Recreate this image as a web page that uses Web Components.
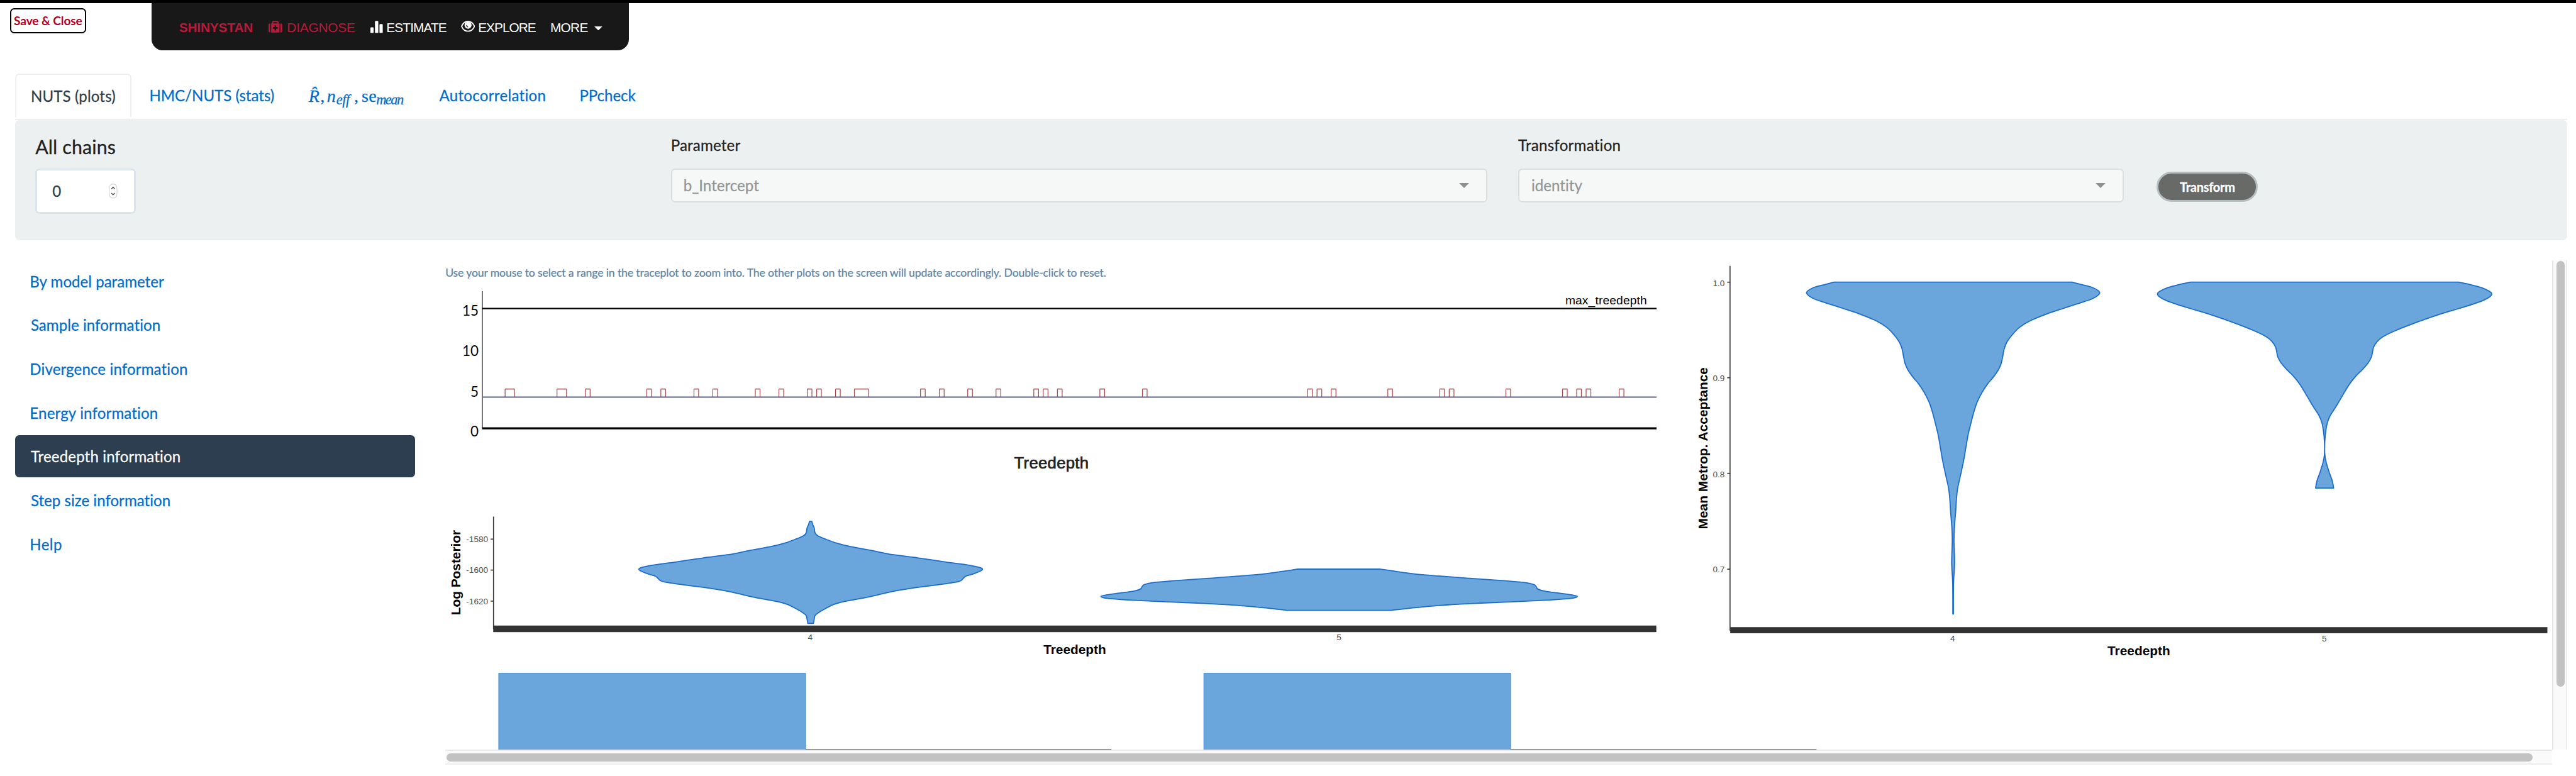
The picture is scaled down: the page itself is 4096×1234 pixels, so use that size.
<!DOCTYPE html>
<html lang="en">
<head>
<meta charset="utf-8">
<title>ShinyStan</title>
<style>
html,body{margin:0;padding:0;background:#fff;overflow:hidden}
body{font-family:Lato,"Liberation Sans",sans-serif}
stan-app{zoom:.80204}
</style>
</head>
<body>
<stan-app></stan-app>
<script>
const define = (name, html, setup) => {
  const t = document.createElement('template');
  t.innerHTML = html;
  customElements.define(name, class extends HTMLElement {
    connectedCallback() {
      if (this.shadowRoot) return;
      this.attachShadow({mode: 'open'}).append(t.content.cloneNode(true));
      if (setup) setup.call(this, this.shadowRoot);
    }
  });
};

// Text run tracked so that its ink fills the width given in "w".
const pen = document.createElement('canvas').getContext('2d');
customElements.define('ink-label', class extends HTMLElement {
  connectedCallback() {
    if (this.shadowRoot) return;
    const root = this.attachShadow({mode: 'open'});
    root.innerHTML = '<style>:host{display:block;white-space:nowrap;flex:none}slot{display:block}</style><slot></slot>';
    const cs = getComputedStyle(this), text = this.textContent, w = +this.getAttribute('w');
    pen.font = `${cs.fontStyle} ${cs.fontWeight} ${cs.fontSize} ${cs.fontFamily}`;
    const m = pen.measureText(text), ink = m.actualBoundingBoxLeft + m.actualBoundingBoxRight;
    this.style.width = w + 'px';
    if (text.length > 1) this.style.letterSpacing = ((w - ink) / (text.length - 1)).toFixed(3) + 'px';
    this.style.textIndent = m.actualBoundingBoxLeft.toFixed(2) + 'px';
  }
});

define('save-button', `<style>
:host{display:flex;box-sizing:border-box;width:151px;height:50px;border:2.500px solid #000;border-radius:8px;background:#fff;
align-items:center;justify-content:center;font:700 24px/30px Lato,sans-serif;color:#b3001f}
</style><ink-label w="136">Save &amp; Close</ink-label>`);

define('nav-bar', `<style>
:host{display:flex;box-sizing:border-box;width:947px;height:94px;padding:3px 0 0 55px;border-radius:0 0 22px 22px;background:#181818;
align-items:center;font:400 26px/30px "Liberation Sans",sans-serif;color:#fff}
svg{display:block;flex:none}
.red{color:#b9193a}.brand{font-weight:700}
</style>
<ink-label class="red brand" w="146">SHINYSTAN</ink-label>
<svg class="red" style="margin:-2px 11px 0 32px" width="27" height="24" viewBox="0 0 27 24" fill="currentColor"><path d="M3.3 5.2V23.3H2.6A2.6 2.6 0 0 1 0 20.7V7.8A2.6 2.6 0 0 1 2.6 5.2zM23.700 5.200h.7A2.600 2.600 0 0 1 27 7.800v12.900a2.600 2.600 0 0 1-2.600 2.600h-.7z"/><path fill-rule="evenodd" d="M5.200 5.200H7V2.600A2.200 2.200 0 0 1 9.200.4h8.600A2.200 2.200 0 0 1 20 2.600v2.600h1.800v18.100H5.200zM9.400 2.800v2.400h8.200V2.800zM12 9.200v3.400H8.600v3.400H12v3.400h3V16h3.400v-3.400H15V9.200z"/></svg>
<ink-label class="red" w="133">DIAGNOSE</ink-label>
<svg style="margin:-2px 8px 0 31px" width="25" height="24" viewBox="0 0 25 24" fill="currentColor"><path d="M0 24V14.500a1.500 1.500 0 0 1 1.500-1.500h3.300a1.500 1.500 0 0 1 1.500 1.500V24zM9 24V1.800A1.500 1.500 0 0 1 10.500.2h3.600a1.500 1.500 0 0 1 1.500 1.600V24zM18 24V8a1.500 1.500 0 0 1 1.500-1.500h3.400A1.500 1.500 0 0 1 24.400 8V24z"/></svg>
<ink-label w="118">ESTIMATE</ink-label>
<svg style="margin:-5px 8px 0 28px" width="28" height="22" viewBox="0 0 28 22"><path d="M1.200 11C4 4.500 8.500 1.200 14 1.200S24 4.500 26.800 11C24 17.500 19.500 20.800 14 20.800S4 17.500 1.200 11z" fill="none" stroke="#fff" stroke-width="2.300"/><circle cx="14" cy="8.800" r="7" fill="#fff"/><path d="M11 8.500c0 2 1.300 3.800 3.200 4" fill="none" stroke="#181818" stroke-width="1.500"/></svg>
<ink-label w="113">EXPLORE</ink-label>
<ink-label style="margin-left:30px" w="73">MORE</ink-label>
<svg style="margin:4px 0 0 13px" width="16" height="8" viewBox="0 0 16 8"><path d="M0 0h16L8 8z" fill="#fff"/></svg>`);

define('math-label', `<style>
:host{display:flex;align-items:baseline;width:188px;font:400 35px/46px "Liberation Serif",serif;position:relative;top:3px}
span{font-style:italic;width:23px;flex:none}
.s{font-size:28px;position:relative;top:5px}
</style>
<span>R&#x302;</span><ink-label style="margin-left:1px" w="6">,</ink-label>
<ink-label style="font-style:italic;margin-left:7px" w="17">n</ink-label>
<ink-label class="s" style="font-style:italic;margin-left:1px" w="30">eff</ink-label>
<ink-label style="margin-left:6px" w="6">,</ink-label><ink-label style="margin-left:9px" w="28">se</ink-label>
<ink-label class="s" style="font-style:italic;margin-left:1px" w="53">mean</ink-label>`);

define('tab-strip', `<style>
:host{display:flex;height:90px;font-size:30px;line-height:42px;color:#006dcc;align-items:flex-start;-webkit-text-stroke-width:.35px}
div{height:86px;display:flex;align-items:center}
.on{box-sizing:border-box;width:231px;border:2.500px solid #ecf0f1;border-bottom:0;border-radius:8px 8px 0 0;padding:1px 0 0 30.500px;color:#2c3e50}
</style>
<div class="on"><ink-label w="165">NUTS (plots)</ink-label></div>
<div style="margin-left:37px"><ink-label w="245">HMC/NUTS (stats)</ink-label></div>
<div style="margin-left:69px"><math-label></math-label></div>
<div style="margin-left:71px"><ink-label w="210">Autocorrelation</ink-label></div>
<div style="margin-left:70px"><ink-label w="110">PPcheck</ink-label></div>`);

define('number-box', `<style>
:host{display:flex;box-sizing:border-box;width:199px;height:90px;border:4px solid #dce4ec;border-radius:8px;background:#fff;
align-items:center;padding:0 32px 0 30px;justify-content:space-between;font-size:30px;line-height:42px;color:#2c3e50}
</style><ink-label w="17">0</ink-label>
<svg width="17" height="30" viewBox="0 0 17 30"><rect x=".8" y=".8" width="15.400" height="28" rx="7.500" fill="#fff" stroke="#cfcfcf" stroke-width="1.300"/><path d="M5.200 10.500 8.500 7l3.300 3.500M5.200 18.800l3.300 3.500 3.300-3.500" fill="none" stroke="#444" stroke-width="1.700"/></svg>`);

define('select-box', `<style>
:host{display:flex;box-sizing:border-box;height:68px;border:2.500px solid #dcdfe0;border-radius:8px;background:#f6f8f7;
align-items:center;justify-content:space-between;padding:0 33.500px 0 24.500px;font-size:30px;line-height:42px;color:#929696}
</style><slot></slot><svg width="20" height="10" viewBox="0 0 20 10"><path d="M0 0h20L10 10z" fill="#8d9191"/></svg>`);

define('control-panel', `<style>
:host{display:flex;box-sizing:border-box;height:238px;border-radius:8px;background:#ecf0f1;padding-left:40px;align-items:flex-start;color:#222;line-height:42px;font-size:30px;-webkit-text-stroke-width:.35px}
.chains{width:199px;padding-top:33px;font-size:38px}
.chains number-box{margin-top:21px}
.f{padding-top:29px}.f select-box{margin-top:25px}
button{margin:102px 0 0 66px;width:200px;height:60px;border:4px solid #b4bec0;border-radius:30px;background:#686a68;color:#fff;
font:700 25px/30px Lato,sans-serif;display:flex;align-items:center;justify-content:center;padding:0}
</style>
<div class="chains"><ink-label w="158">All chains</ink-label><number-box></number-box></div>
<div class="f" style="width:1619px;margin-left:1061px"><ink-label style="margin-left:2px" w="136">Parameter</ink-label><select-box><ink-label w="148">b_Intercept</ink-label></select-box></div>
<div class="f" style="width:1200px;margin-left:61px"><ink-label w="202">Transformation</ink-label><select-box><ink-label w="101">identity</ink-label></select-box></div>
<button><ink-label w="109">Transform</ink-label></button>`);

define('side-item', `<style>
:host{display:flex;box-sizing:border-box;height:82.860px;padding:1px 0 0 31px;align-items:center;border-radius:8px;font-size:30px;line-height:42px;color:#006dcc;-webkit-text-stroke-width:.35px}
:host([active]){background:#2c3e50;color:#fff}
</style><slot></slot>`);

define('side-nav', `<style>:host{display:flex;flex-direction:column;gap:4px;width:793px;flex:none}</style>
<side-item><ink-label w="265">By model parameter</ink-label></side-item>
<side-item><ink-label w="256">Sample information</ink-label></side-item>
<side-item><ink-label w="310">Divergence information</ink-label></side-item>
<side-item><ink-label w="252">Energy information</ink-label></side-item>
<side-item active><ink-label w="296">Treedepth information</ink-label></side-item>
<side-item><ink-label w="276">Step size information</ink-label></side-item>
<side-item><ink-label w="61">Help</ink-label></side-item>`);

// Closed outline from a half profile: flat cap and base, smooth mirrored flanks.
function violin(pts, cx, ox, oy, sx, sy) {
  const side = s => pts.map(([x, y]) => [ox + (cx + s * (x - cx)) / sx, oy + y / sy]);
  const curve = p => p.slice(1).map((q, i) => {
    const a = p[i - 1] || p[i], b = p[i], d = p[i + 2] || q;
    return 'C' + [b[0] + (q[0] - a[0]) / 6, b[1] + (q[1] - a[1]) / 6, q[0] - (d[0] - b[0]) / 6, q[1] - (d[1] - b[1]) / 6, q[0], q[1]].map(v => v.toFixed(2)).join(' ');
  }).join('');
  const r = side(1), l = side(-1).reverse();
  return `<path d="M${r[0]}${curve(r)}L${l[0]}${curve(l)}Z" fill="#6aa6dc" stroke="#1b6dcc" stroke-width="2.200" stroke-linejoin="round"/>`;
}
const svg = (x, y, w, h, body) => `<style>:host{display:block;flex:none}svg{display:block}text{font-family:"Liberation Sans",sans-serif}
.t{font-size:17px;fill:#4d4d4d}.b{font-size:26px;font-weight:700;fill:#000}.d{font-family:Lato,sans-serif;font-size:28px;fill:#000}</style>
<svg width="${w}" height="${h}" viewBox="${x} ${y} ${w} ${h}">${body}</svg>`;

const highs = [[5,7],[16,18],[22],[35],[38],[45],[49],[58],[63],[69],[71],[75],[79,82],[93],[97],[103],[109],[117],[119],[122],[131],[140],[175],[177],[180],[192],[203],[205],[217],[229],[232],[234],[241]];
const tx = n => (954.8 + 9.359 * n).toFixed(1);
define('trace-plot', svg(883, 567, 2457, 305, `
<path d="M956.500 577V849" stroke="#555" stroke-width="2"/>
<path d="M956 611.500H3284.500" stroke="#000" stroke-width="2.700"/>
${highs.map(([a, b = a + 1]) => `<path d="M${tx(a)} 787V771M${tx(b)} 771V787" stroke="#a84444" stroke-width="1.500"/><path d="M${tx(a)} 771H${tx(b)}" stroke="#b97272" stroke-width="2.300"/>`).join('')}
<path d="M957 787H3284.500" stroke="#65658e" stroke-width="2.500"/>
<path d="M956 849H3284.500" stroke="#000" stroke-width="4"/>
<g text-anchor="end"><text class="d" x="949" y="626">15</text><text class="d" x="949" y="706">10</text><text class="d" x="949" y="786">5</text><text class="d" x="949" y="865">0</text></g>
<text x="3103.500" y="603" font-size="24" textLength="162">max_treedepth</text>`));

const tick = (x, y, s, base) => `<path d="M${x - 6} ${y}h6" stroke="#333" stroke-width="2"/><text class="t" text-anchor="end" x="${x - 11}" y="${base}">${s}</text>`;
define('posterior-plot', svg(883, 966, 2457, 344, `
<path d="M978.600 1024V1247" stroke="#333" stroke-width="2"/>
${tick(979, 1068.6, '-1580', 1074.6)}${tick(979, 1130, '-1600', 1136)}${tick(979, 1191.6, '-1620', 1197.7)}
${violin([[948,199],[950,215],[954,235],[956,260],[963,277],[985,297],[1010,316],[1045,335],[1100,357],[1150,378],[1215,396],[1285,418],[1345,436],[1370,448],[1376,457],[1370,467],[1355,480],[1335,493],[1328,505],[1322,518],[1310,526],[1280,536],[1215,554],[1160,572],[1130,586],[1090,606],[1030,630],[1003,646],[985,665],[965,690],[956,706],[954,725],[952,748]], 945, 860, 960, 1.2645, 2.7128)}
${violin([[805,456],[860,473],[920,488],[1040,507],[1120,519],[1170,529],[1190,539],[1196,550],[1200,563],[1216,574],[1260,587],[1290,597],[1299,604],[1285,613],[1230,622],[1130,632],[1030,642],[940,654],[880,666],[832,678]], 702, 2100, 960, 1.2645, 2.7128)}
<rect x="978" y="1240" width="2306" height="13" fill="#333"/>
<text class="t" text-anchor="middle" x="1606.500" y="1269">4</text><text class="t" text-anchor="middle" x="2654.800" y="1269">5</text>
<text class="b" text-anchor="middle" x="2131" y="1297">Treedepth</text>
<text class="b" text-anchor="middle" transform="translate(913 1135) rotate(-90)">Log Posterior</text>`));

define('acceptance-plot', svg(3340, 516, 1720, 794, `
<path d="M3429.600 527V1250" stroke="#333" stroke-width="2"/>
${tick(3430, 559.3, '1.0', 567)}${tick(3430, 748.8, '0.9', 756)}${tick(3430, 938.3, '0.8', 946)}${tick(3430, 1128.3, '0.7', 1135)}
${violin([[1372,112],[1405,121],[1440,131],[1462,143],[1468,152],[1460,163],[1440,175],[1400,190],[1340,211],[1280,233],[1225,258],[1190,282],[1165,310],[1147,337],[1138,362],[1132,395],[1127,418],[1117,442],[1100,468],[1080,494],[1062,524],[1045,560],[1034,595],[1023,640],[1013,685],[1005,735],[997,785],[985,845],[977,885],[973,925],[970,975],[966,1030],[964.5,1080],[966.5,1165],[963,1240],[962.5,1355]], 961.5, 3320, 500, 1.7422, 1.8892)}
${violin([[1165,112],[1205,121],[1245,133],[1272,147],[1279,156],[1272,167],[1250,180],[1210,196],[1165,211],[1090,236],[1015,265],[950,293],[905,317],[885,336],[874,355],[870,375],[866,393],[855,415],[835,440],[812,465],[790,496],[765,541],[745,578],[725,612],[715,640],[710,670],[706.6,710],[706.6,755],[711,785],[722,825],[732,855],[737,883]], 706, 4200, 500, 1.7288, 1.8892)}
<rect x="3430" y="1243.200" width="1620" height="12.200" fill="#333"/>
<text class="t" text-anchor="middle" x="3871" y="1272">4</text><text class="t" text-anchor="middle" x="4607.800" y="1272">5</text>
<text class="b" text-anchor="middle" x="4240" y="1299.300">Treedepth</text>
<text class="b" text-anchor="middle" textLength="321" transform="translate(3384.300 888.500) rotate(-90)">Mean Metrop. Acceptance</text>`));

define('histogram-plot', svg(883, 1310, 4177, 176, `
<g fill="#6aa6dc" stroke="#3a83cf" stroke-width="1.300"><path d="M989 1490V1334.700H1597V1490zM2387 1490V1334.700H2995V1490z"/></g>
<path d="M1597 1485.300H2203.600M2995 1485.300H3601.600" stroke="#2f7dd0" stroke-width="1.400"/>`));

define('scroll-bar', `<style>
:host{display:block;box-sizing:border-box;background:#fafafa;flex:none}
:host([dir=v]){width:30px;height:970px;border-left:2.500px solid #e7e7e7;border-right:2.500px solid #ededed;padding:2px 0 0 5.500px}
:host([dir=h]){width:4177px;height:30px;border-top:2.500px solid #e7e7e7;border-bottom:2.500px solid #ededed;padding:5.500px 0 0 2.500px}
div{border-radius:8px;background:#c2c2c2}
:host([dir=v]) div{width:16px;height:844px}:host([dir=h]) div{width:4136px;height:16px}
</style><div></div>`);

define('plot-pane', `<style>
:host{display:flex;align-items:flex-start;flex:none}
.top{display:flex;height:794px}
p{margin:0;height:51px;font-size:22px;line-height:51px;padding-left:1px;color:#5b84a8;-webkit-text-stroke-width:.3px}
h3{margin:0;height:94px;font:400 32px/94px "Liberation Sans",sans-serif;color:#222;padding-left:1127.600px;-webkit-text-stroke:.9px #222}
</style>
<div><div class="top"><div>
<p><ink-label w="1312">Use your mouse to select a range in the traceplot to zoom into. The other plots on the screen will update accordingly. Double-click to reset.</ink-label></p>
<trace-plot></trace-plot><h3><ink-label w="146">Treedepth</ink-label></h3><posterior-plot></posterior-plot>
</div><acceptance-plot></acceptance-plot></div>
<histogram-plot></histogram-plot><scroll-bar dir="h"></scroll-bar></div>
<scroll-bar dir="v"></scroll-bar>`);

define('stan-app', `<style>
:host{display:block;width:5107px;height:1538.600px;overflow:hidden;background:#fff}
.edge{height:6px;background:#000}
header{display:flex;height:140px;align-items:flex-start;padding-left:20px}
save-button{margin-top:10px}nav-bar{margin-left:129px}
main{padding-left:30px;width:5060px}
.line{height:2px;background:#ecf0f1}
.body{display:flex;gap:60px;padding-top:40px;align-items:flex-start}
</style>
<div class="edge"></div>
<header><save-button></save-button><nav-bar></nav-bar></header>
<main><tab-strip></tab-strip><div class="line"></div><control-panel></control-panel>
<div class="body"><side-nav></side-nav><plot-pane></plot-pane></div></main>`);
</script>
</body>
</html>
